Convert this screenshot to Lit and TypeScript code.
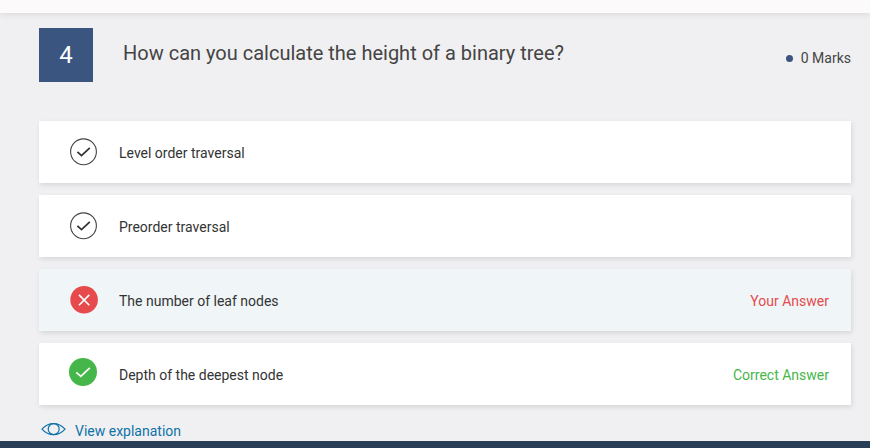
import { LitElement, html, css, svg, nothing } from "lit";
import { customElement, property } from "lit/decorators.js";
import { classMap } from "lit/directives/class-map.js";

type Status = "plain" | "wrong" | "correct";

interface Option {
  text: string;
  status: Status;
  verdict?: string;
}

@customElement("answer-option")
class AnswerOption extends LitElement {
  @property({ attribute: false }) option!: Option;

  static styles = css`
    :host {
      display: block;
    }
    .card {
      box-sizing: border-box;
      display: flex;
      align-items: center;
      height: 62px;
      padding: 0 22px 0 29px;
      background: #fff;
      box-shadow: 1px 2px 5px rgba(0, 0, 0, 0.11);
      color: #333;
      font-size: 14px;
      line-height: 20px;
    }
    .card.wrong {
      background: #f0f6f8;
    }
    svg {
      flex: none;
      width: 32px;
      height: 32px;
      margin-right: 19px;
    }
    .text {
      flex: 1;
      padding-top: 2px;
    }
    .verdict {
      padding-top: 2px;
    }
    .wrong .verdict {
      color: #e64a4c;
    }
    .correct .verdict {
      color: #45b649;
    }
  `;

  private icon() {
    switch (this.option.status) {
      case "wrong":
        return svg`<circle cx="16.1" cy="15.7" r="13.8" fill="#e64a4c"/>
          <path d="M11 10.9l10.3 10.4M21.3 10.9L11 21.3" fill="none" stroke="#fff" stroke-width="1.6"/>`;
      case "correct":
        return svg`<circle cx="15" cy="14" r="14" fill="#45b649"/>
          <path d="M8.3 14.3l4.5 4.1 9-8.6" fill="none" stroke="#fff" stroke-width="1.7"/>`;
      default:
        return svg`<circle cx="15.5" cy="15.8" r="12.9" fill="none" stroke="#444" stroke-width="1.1"/>
          <path d="M9.4 15.8l4.1 3.8 8.3-7.8" fill="none" stroke="#333" stroke-width="1.8"/>`;
    }
  }

  render() {
    const { text, status, verdict } = this.option;
    return html`
      <div class=${classMap({ card: true, [status]: true })}>
        <svg viewBox="0 0 32 32">${this.icon()}</svg>
        <span class="text">${text}</span>
        ${verdict ? html`<span class="verdict">${verdict}</span>` : nothing}
      </div>
    `;
  }
}

@customElement("app-root")
class AppRoot extends LitElement {
  private options: Option[] = [
    { text: "Level order traversal", status: "plain" },
    { text: "Preorder traversal", status: "plain" },
    { text: "The number of leaf nodes", status: "wrong", verdict: "Your Answer" },
    { text: "Depth of the deepest node", status: "correct", verdict: "Correct Answer" },
  ];

  static styles = css`
    :host {
      display: flex;
      flex-direction: column;
      height: 448px;
      overflow: hidden;
      background: #f0f0f2;
      font-family: Roboto, sans-serif;
      color: #444;
    }
    .topbar {
      flex: none;
      height: 13px;
      background: #fcfafb;
      box-shadow: 0 0 8px rgba(0, 0, 0, 0.13);
    }
    .page {
      flex: 1;
      min-height: 0;
      padding: 15px 19px 0 39px;
    }
    .question {
      display: flex;
      height: 93px;
    }
    .number {
      flex: none;
      width: 54px;
      height: 54px;
      background: #3a557f;
      color: #fff;
      font-size: 24px;
      line-height: 54px;
      text-align: center;
    }
    .title {
      flex: 1;
      margin: 11px 0 0 30px;
      font-size: 20px;
      font-weight: 400;
      line-height: 28px;
    }
    .marks {
      display: flex;
      align-items: center;
      gap: 8px;
      height: 20px;
      margin-top: 20px;
      font-size: 14px;
    }
    .dot {
      width: 7px;
      height: 7px;
      border-radius: 50%;
      background: #3a557f;
    }
    .options {
      display: grid;
      gap: 12px;
    }
    .explain {
      display: flex;
      align-items: center;
      height: 20px;
      margin: 16px 0 0 2px;
      color: #0f72a8;
      font-size: 14px;
      text-decoration: none;
    }
    .eye {
      width: 26px;
      height: 16px;
      margin: -4px 8px 0 0;
    }
    .footer {
      flex: none;
      height: 7px;
      background: #283e56;
    }
  `;

  render() {
    return html`
      <div class="topbar"></div>
      <main class="page">
        <header class="question">
          <div class="number">4</div>
          <h1 class="title">How can you calculate the height of a binary tree?</h1>
          <div class="marks"><span class="dot"></span><span>0 Marks</span></div>
        </header>
        <div class="options">
          ${this.options.map((o) => html`<answer-option .option=${o}></answer-option>`)}
        </div>
        <a class="explain">
          <svg class="eye" viewBox="0 0 26 16" fill="none" stroke="#0f72a8" stroke-width="1.2">
            <path d="M1 8.1C7.5 0.7 17.5 0.7 24 8.1C17.5 15.5 7.5 15.5 1 8.1Z" />
            <circle cx="12.7" cy="8.1" r="5.5" />
          </svg>
          <span>View explanation</span>
        </a>
      </main>
      <div class="footer"></div>
    `;
  }
}
